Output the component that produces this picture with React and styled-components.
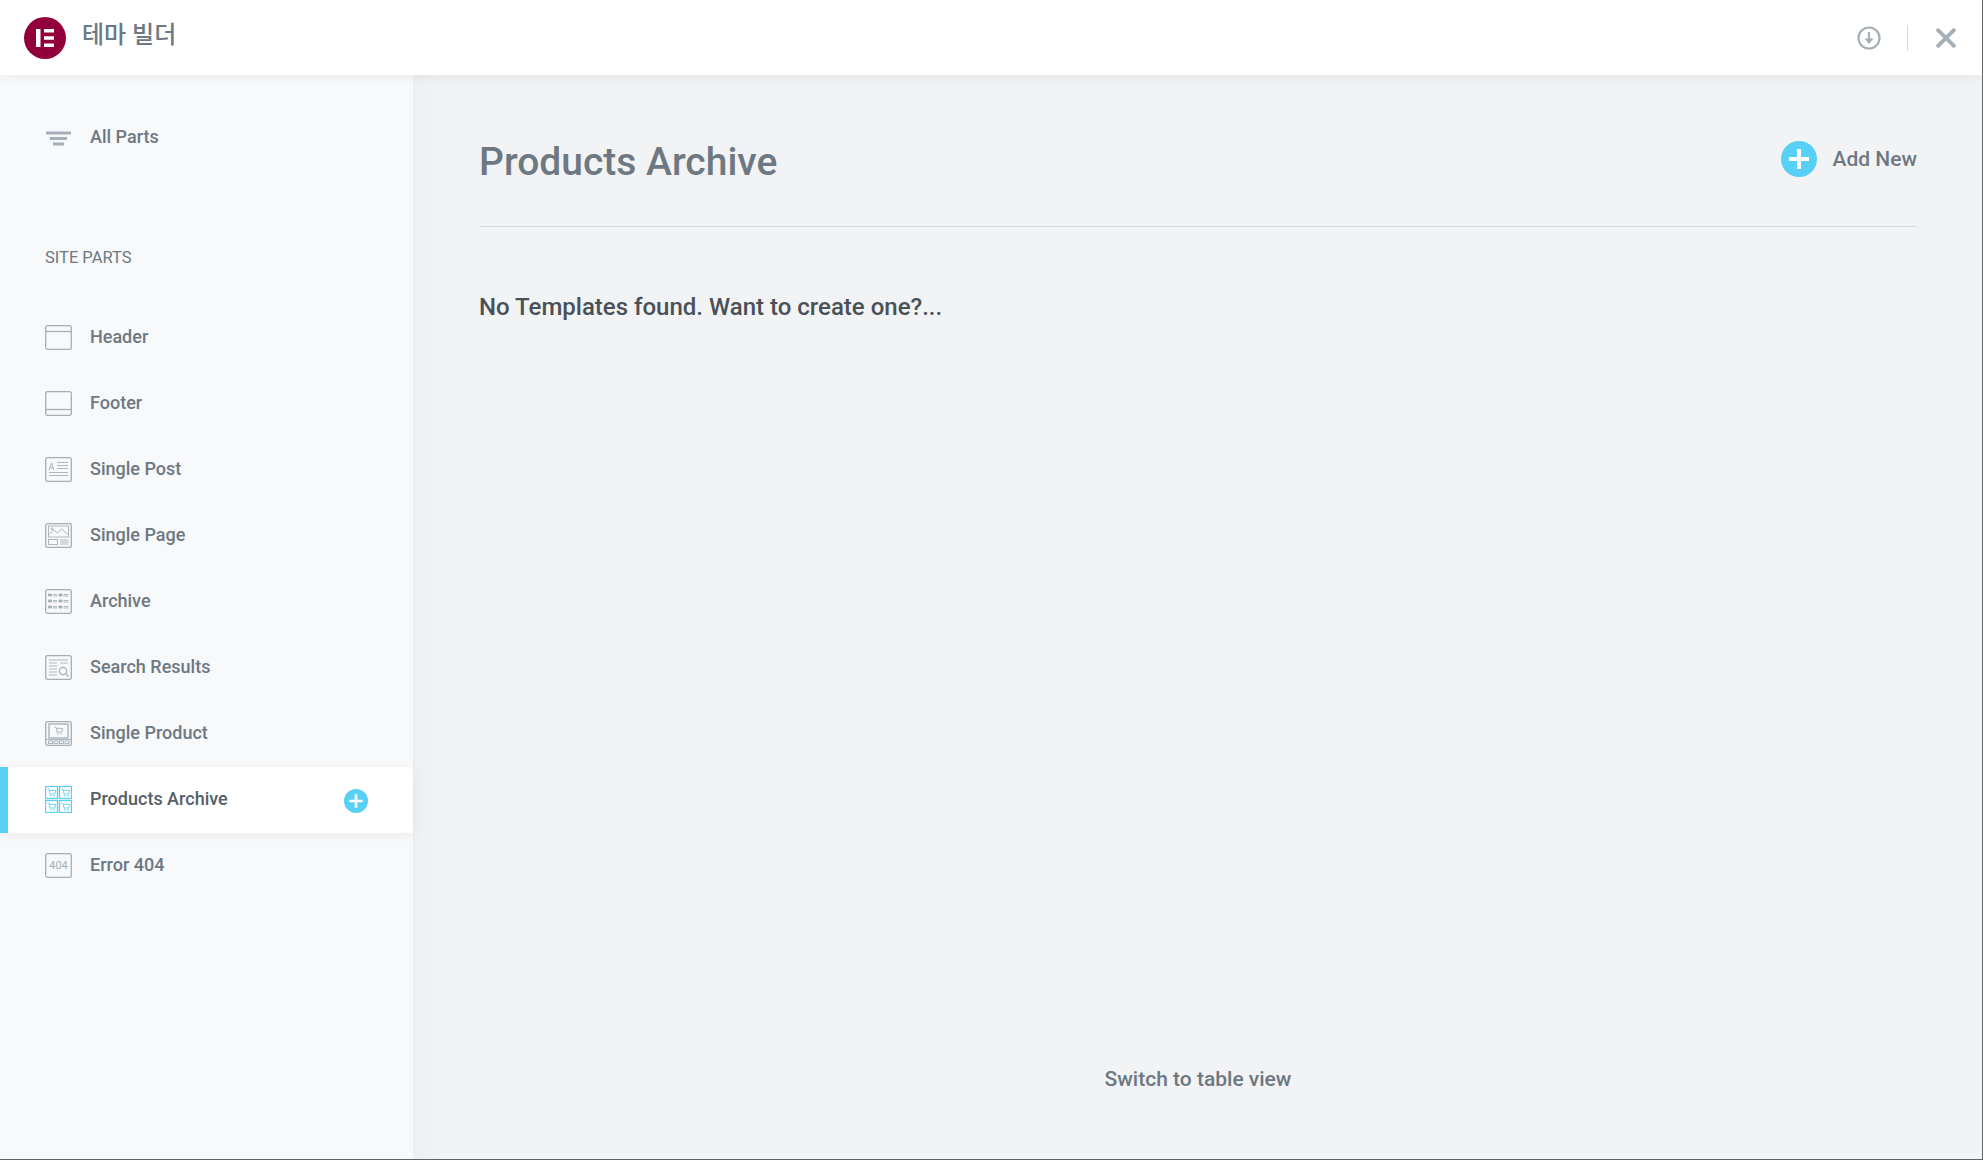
import React from 'react';
import styled, { createGlobalStyle } from 'styled-components';

const Global = createGlobalStyle`
  html, body { margin: 0; padding: 0; background: #5f6368; }
  body { font-family: Roboto, "Noto Sans CJK KR", sans-serif; overflow: hidden; }
`;

const Frame = styled.div`
  width: 1982px;
  height: 1159px;
  display: flex;
  flex-direction: column;
  background: #f1f3f5;
  overflow: hidden;
`;

const TopBar = styled.header`
  height: 75px;
  flex: none;
  background: #fff;
  display: flex;
  align-items: center;
  padding: 0 26px 0 24px;
  box-shadow: 0 2px 12px rgba(0, 0, 0, 0.06);
  position: relative;
  z-index: 3;
`;

const Logo = styled.svg`
  width: 42px;
  height: 42px;
  flex: none;
  margin-top: 1px;
`;

const Title = styled.h1`
  margin: -10px 0 0 16px;
  font: 500 24px Roboto, "Noto Sans CJK KR", sans-serif;
  color: #6d7882;
  flex: 1;
`;

const TopActions = styled.div`
  display: flex;
  align-items: center;
`;

const Divider = styled.span`
  width: 1px;
  height: 26px;
  background: #d5dadf;
  margin: 0 28px 0 26px;
`;

const TopIcon = styled.svg`
  display: block;
  fill: none;
  stroke: #a4afb7;
`;

const Body = styled.div`
  flex: 1;
  display: flex;
  min-height: 0;
`;

const Sidebar = styled.aside`
  width: 413px;
  flex: none;
  background: #f8f9fa;
  border-right: 1px solid #eceef0;
  box-shadow: 4px 0 12px rgba(0, 0, 0, 0.015);
`;

const AllParts = styled.div`
  height: 66px;
  margin-top: 30px;
  display: flex;
  align-items: center;
  padding-left: 45px;
  color: #6d7882;
  font-size: 18px;
  font-weight: 500;
`;

const SectionLabel = styled.div`
  margin: 77px 0 0 45px;
  height: 57px;
  font-size: 16.5px;
  line-height: 20px;
  color: #6d7882;
`;

const Row = styled.div`
  position: relative;
  z-index: ${p => (p.$active ? 1 : 0)};
  height: 66px;
  display: flex;
  align-items: center;
  padding-left: 45px;
  background: ${p => (p.$active ? '#fff' : 'transparent')};
  box-shadow: ${p => (p.$active ? '0 3px 10px rgba(0,0,0,0.05)' : 'none')};
  &::before {
    content: '';
    display: ${p => (p.$active ? 'block' : 'none')};
    position: absolute;
    left: 0;
    top: 0;
    bottom: 0;
    width: 8px;
    background: #58d0f5;
  }
`;

const RowIcon = styled.svg`
  width: 27px;
  height: 27px;
  flex: none;
  margin: -1px 18px 0 0;
  fill: none;
  stroke: ${p => (p.$active ? '#58d0f5' : '#a4afb7')};
  stroke-width: 1.3;
`;

const AllIcon = styled.svg`
  width: 27px;
  height: 27px;
  flex: none;
  margin: 2px 18px 0 0;
  stroke: #a4afb7;
  stroke-width: 3;
`;

const RowLabel = styled.span`
  flex: 1;
  margin-top: -4px;
  font-size: 18px;
  font-weight: 500;
  color: ${p => (p.$active ? '#556068' : '#6d7882')};
`;

const Plus = styled.svg`
  display: block;
  flex: none;
  margin: ${p => p.$m || 0};
`;

const Main = styled.main`
  flex: 1;
  display: flex;
  flex-direction: column;
  padding: 0 65px;
  min-width: 0;
  background: linear-gradient(90deg, #eeeff1 0, #f1f3f5 24px);
`;

const PageHead = styled.div`
  height: 152px;
  flex: none;
  display: flex;
  align-items: center;
  justify-content: space-between;
  border-bottom: 1px solid #d5dadf;
  padding-top: 22px;
  box-sizing: border-box;
`;

const PageTitle = styled.h2`
  margin: 0;
  font-size: 39px;
  font-weight: 500;
  color: #6d7882;
`;

const AddNew = styled.div`
  display: flex;
  align-items: center;
  gap: 15px;
  margin-top: -5px;
  font-size: 21px;
  font-weight: 500;
  color: #6d7882;
`;

const Empty = styled.p`
  margin: 66px 0 0;
  font-size: 24px;
  line-height: 28px;
  font-weight: 500;
  color: #495157;
`;

const SwitchView = styled.div`
  margin-top: auto;
  padding-bottom: 67px;
  text-align: center;
  font-size: 21px;
  line-height: 25px;
  font-weight: 500;
  color: #6d7882;
`;

const Detail = styled.g`
  stroke-width: 0.9;
`;

const PlusIcon = ({ size, m }) => (
  <Plus $m={m} width={size} height={size} viewBox="0 0 36 36">
    <circle cx="18" cy="18" r="18" fill="#58d0f5" />
    <path d="M18 8v20M8 18h20" stroke="#fff" strokeWidth="4" />
  </Plus>
);

const Cart = ({ x, y }) => (
  <Detail transform={`translate(${x} ${y})`}>
    <path d="M0 0h1.400l1.200 5h4.600L8.200 1.400H2" />
    <circle cx="3.200" cy="6.800" r=".4" />
    <circle cx="6.600" cy="6.800" r=".4" />
  </Detail>
);

const Base = () => <rect x=".7" y="1.700" width="25.600" height="23.600" rx="2" />;

const icons = {
  header: <><Base /><path d="M.5 7.500h26" /></>,
  footer: <><Base /><path d="M.5 19.500h26" /></>,
  post: (
    <>
      <Base />
      <Detail>
        <path d="M4 14l2.500-7L9 14M4.800 11.800h3.400M12 6.500h11M12 9.500h11M12 12.500h11M4 16.500h19M4 19.500h19" />
      </Detail>
    </>
  ),
  page: (
    <>
      <Base />
      <Detail>
        <rect x="3.500" y="4" width="20" height="11" />
        <path d="M3.500 13l5-5 4 3 4-4 7 6" />
        <circle cx="7" cy="6.800" r="1" />
        <rect x="3.500" y="17.500" width="9" height="5" />
        <path d="M15 18h8.500M15 20h8.500M15 22h8.500" />
      </Detail>
    </>
  ),
  archive: (
    <>
      <Base />
      <Detail>
        <path d="M3.500 6h3v2h-3zM14 6h3v2h-3z" fill="#a4afb7" />
        <path d="M8 6.500h4M8 8h4M18.500 6.500h5M18.500 8h5" />
        <path d="M3.500 12h3v2h-3zM14 12h3v2h-3z" fill="#a4afb7" />
        <path d="M8 12.500h4M8 14h4M18.500 12.500h5M18.500 14h5" />
        <path d="M3.500 18h3v2h-3zM14 18h3v2h-3z" fill="#a4afb7" />
        <path d="M8 18.500h4M8 20h4M18.500 18.500h5M18.500 20h5" />
      </Detail>
    </>
  ),
  search: (
    <>
      <Base />
      <Detail>
        <path d="M4 6h19M4 9h8M15 9h8M4 12h8M4 15h8M4 18h8M4 21h8" />
      </Detail>
      <circle cx="18" cy="17" r="3.600" />
      <path d="M20.600 19.600l3 3" />
    </>
  ),
  product: (
    <>
      <Base />
      <rect x="4" y="4" width="19" height="14" />
      <Cart x={9.5} y={7} />
      <Detail>
        <path d="M.5 19.500h26" />
        <rect x="3.500" y="21" width="4" height="2.500" />
        <rect x="9" y="21" width="4" height="2.500" />
        <rect x="14.500" y="21" width="4" height="2.500" />
        <rect x="20" y="21" width="4" height="2.500" />
      </Detail>
    </>
  ),
  products: (
    <>
      <rect x=".5" y=".5" width="12" height="12" />
      <rect x="14.500" y=".5" width="12" height="12" />
      <rect x=".5" y="14.500" width="12" height="12" />
      <rect x="14.500" y="14.500" width="12" height="12" />
      <Cart x={2.5} y={3} />
      <Cart x={16.5} y={3} />
      <Cart x={2.5} y={17} />
      <Cart x={16.5} y={17} />
    </>
  ),
  err: (
    <>
      <Base />
      <text x="13.500" y="17" textAnchor="middle" fontFamily="Roboto, sans-serif" fontSize="11" fill="#a4afb7" stroke="none">404</text>
    </>
  ),
};

const parts = [
  ['Header', 'header'],
  ['Footer', 'footer'],
  ['Single Post', 'post'],
  ['Single Page', 'page'],
  ['Archive', 'archive'],
  ['Search Results', 'search'],
  ['Single Product', 'product'],
  ['Products Archive', 'products', true],
  ['Error 404', 'err'],
];

export default function App() {
  return (
    <>
      <Global />
      <Frame>
        <TopBar>
          <Logo viewBox="0 0 42 42">
            <circle cx="21" cy="21" r="21" fill="#92003b" />
            <path d="M12 12h4.500v18H12zM20 12h10v3.600H20zM20 19.200h10v3.600H20zM20 26.400h10V30H20z" fill="#fff" />
          </Logo>
          <Title>테마 빌더</Title>
          <TopActions>
            <TopIcon width="24" height="24" viewBox="0 0 24 24" strokeWidth="2.200">
              <circle cx="12" cy="12" r="10.500" />
              <path d="M12 6v8" />
              <path d="M7.500 12.500h9L12 18z" fill="#a4afb7" stroke="none" />
            </TopIcon>
            <Divider />
            <TopIcon width="20" height="20" viewBox="0 0 20 20" strokeWidth="3.800">
              <path d="M1 1l18 18M19 1L1 19" />
            </TopIcon>
          </TopActions>
        </TopBar>
        <Body>
          <Sidebar>
            <AllParts>
              <AllIcon viewBox="0 0 27 27">
                <path d="M1 7h25M5 12.500h17M8 18h11" />
              </AllIcon>
              <RowLabel>All Parts</RowLabel>
            </AllParts>
            <SectionLabel>SITE PARTS</SectionLabel>
            {parts.map(([label, key, active]) => (
              <Row key={key} $active={active}>
                <RowIcon viewBox="0 0 27 27" $active={active}>{icons[key]}</RowIcon>
                <RowLabel $active={active}>{label}</RowLabel>
                {active && <PlusIcon size={24} m="2px 45px 0 0" />}
              </Row>
            ))}
          </Sidebar>
          <Main>
            <PageHead>
              <PageTitle>Products Archive</PageTitle>
              <AddNew>
                <PlusIcon size={36} />
                Add New
              </AddNew>
            </PageHead>
            <Empty>No Templates found. Want to create one?...</Empty>
            <SwitchView>Switch to table view</SwitchView>
          </Main>
        </Body>
      </Frame>
    </>
  );
}
